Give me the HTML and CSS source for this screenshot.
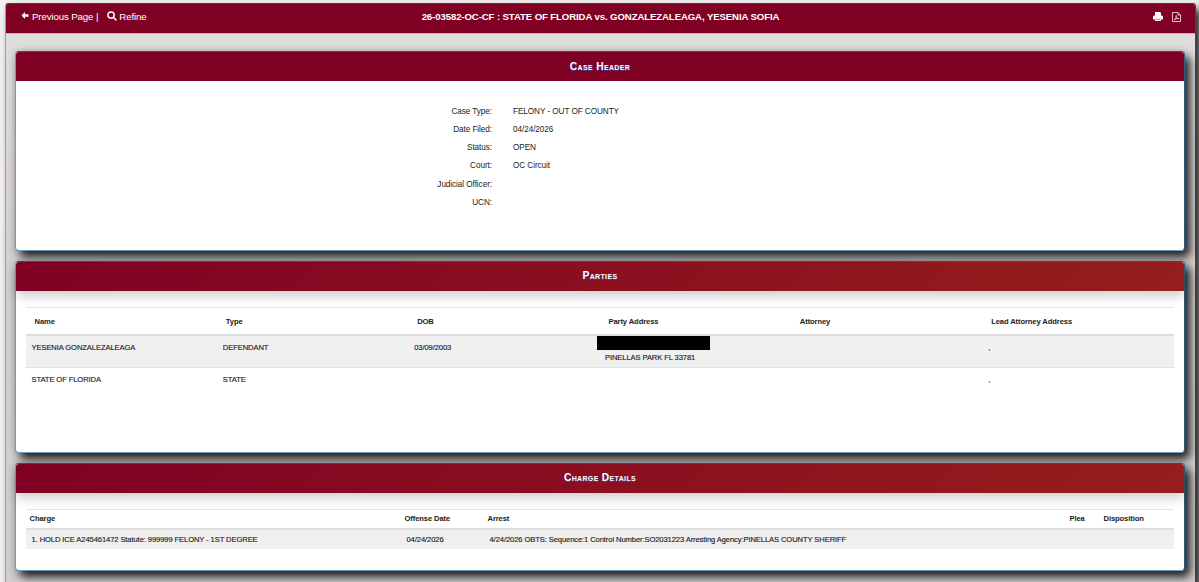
FILE: index.html
```html
<!DOCTYPE html>
<html lang="en">
<head>
<meta charset="utf-8">
<title>Case Details</title>
<link rel="stylesheet" href="styles.css">
</head>
<body>
<main class="case">
  <header class="topbar">
    <nav class="links">
      <a class="link back"><svg class="arrow" viewBox="0 0 16 16"><path d="M0 8 8 0v5h8v6H8v5z"/></svg><span>Previous Page |</span></a>
      <a class="link"><svg class="search" viewBox="0 0 16 16"><circle cx="6.500" cy="6.500" r="5"/><path d="m10 10 5 5"/></svg><span class="refine">Refine</span></a>
    </nav>
    <h1 class="title">26-03582-OC-CF : STATE OF FLORIDA vs. GONZALEZALEAGA, YESENIA SOFIA</h1>
    <div class="tools">
      <svg class="print" viewBox="0 0 20 18"><path d="M5 0h9l2 2v5h2l2 2v6h-4v3H4v-3H0V9l2-2h2V0z"/><path class="slot" d="M4 14.500h12"/></svg>
      <svg class="pdf" viewBox="0 0 18 20"><path d="M1 1h11l5 5v13H1zM12 1v5h5"/><path d="M4 16c4-2 5-6 4.500-9-1.500 1 0 6 5.500 6.500-3-1-8 0-10 2.500"/></svg>
    </div>
  </header>
  <div class="panels">
    <section class="panel summary">
      <h2 class="heading">Case Header</h2>
      <dl class="facts">
        <dt>Case Type:</dt><dd>FELONY - OUT OF COUNTY</dd>
        <dt>Date Filed:</dt><dd>04/24/2026</dd>
        <dt>Status:</dt><dd>OPEN</dd>
        <dt>Court:</dt><dd>OC Circuit</dd>
        <dt>Judicial Officer:</dt><dd></dd>
        <dt>UCN:</dt><dd></dd>
      </dl>
    </section>
    <section class="panel parties">
      <h2 class="heading fade">Parties</h2>
      <table class="grid">
        <thead><tr><th>Name</th><th>Type</th><th>DOB</th><th>Party Address</th><th>Attorney</th><th>Lead Attorney Address</th></tr></thead>
        <tbody>
          <tr class="shaded"><td>YESENIA GONZALEZALEAGA</td><td>DEFENDANT</td><td>03/09/2003</td><td class="address"><div class="redacted"></div><div class="city">PINELLAS PARK FL 33781</div></td><td></td><td class="comma">,</td></tr>
          <tr><td>STATE OF FLORIDA</td><td>STATE</td><td></td><td></td><td></td><td class="comma">,</td></tr>
        </tbody>
      </table>
    </section>
    <section class="panel charges">
      <h2 class="heading fade">Charge Details</h2>
      <table class="grid compact">
        <colgroup><col class="c-charge"><col class="c-date"><col class="c-arrest"><col class="c-plea"><col></colgroup>
        <thead><tr><th>Charge</th><th>Offense Date</th><th>Arrest</th><th>Plea</th><th>Disposition</th></tr></thead>
        <tbody><tr class="shaded"><td class="charge">1. HOLD ICE A245461472 Statute: 999999 FELONY - 1ST DEGREE</td><td>04/24/2026</td><td class="arrest">4/24/2026 OBTS: Sequence:1 Control Number:SO2031223 Arresting Agency:PINELLAS COUNTY SHERIFF</td><td></td><td></td></tr></tbody>
      </table>
    </section>
  </div>
</main>
</body>
</html>
```
FILE: styles.css
```css
* { box-sizing: border-box; }
html { height: 100%; overflow: hidden; }
body {
  margin: 0;
  height: 582px;
  padding: 3px 3px 0 5px;
  overflow: hidden;
  background: #f1f1f1;
  font-family: "Liberation Sans", Arial, sans-serif;
  color: #222;
}
.case {
  height: 600px;
  border: 1px solid #7fa5c4;
  border-top-color: #55325f;
  border-right-color: #24506f;
  border-radius: 3px;
  background: linear-gradient(#e0dfdd 30px, #dedcda 50px, #d4d0cf 260px, #d1cecd);
  box-shadow: 5px 6px 9px rgba(0, 0, 0, .85);
}
.topbar {
  height: 30px;
  display: grid;
  grid-template-columns: 1fr auto 1fr;
  align-items: center;
  padding: 0 14px;
  border-bottom: 1px solid #c3b2b9;
  border-radius: 2px 2px 0 0;
  background: #800024;
  color: #fff;
}
.links, .link, .tools { display: flex; align-items: center; }
.links { gap: 9px; padding-bottom: 4px; }
.link { font-size: 9.700px; line-height: 14px; gap: 3px; letter-spacing: -.13px; }
.arrow { width: 8px; height: 7px; fill: #fff; margin: -2px 0 0 1px; }
.search { width: 10px; height: 10px; fill: none; stroke: #fff; stroke-width: 2.3; margin-top: -2px; }
.refine { margin-left: -1px; }
.title { margin: 0 0 4px; font-size: 9.600px; line-height: 14px; letter-spacing: -.1px; white-space: nowrap; }
.tools { justify-content: flex-end; gap: 9px; }
.print { width: 10px; height: 9px; fill: #fff; margin-top: -5px; }
.slot { stroke: #800024; stroke-width: 1; }
.pdf { width: 9px; height: 10px; fill: none; stroke: #f4c8d4; stroke-width: 1.9; margin-top: -3px; }
.panels { padding: 17px 10px 0; margin-left: -1px; display: flex; flex-direction: column; gap: 10px; }
.panel {
  border: 1px solid #6f99b8;
  border-top-color: #6b3860;
  border-right-color: #315f80;
  border-radius: 4px;
  background: #fff;
  box-shadow: 5px 6px 10px rgba(0, 0, 0, .85), 0 0 9px rgba(0, 0, 0, .15);
}
.summary { height: 200px; }
.parties { height: 192px; }
.charges { height: 108px; }
.heading {
  margin: 0;
  height: 29px;
  border-radius: 3px 3px 0 0;
  background: #800024;
  color: #fff;
  font-size: 10.200px;
  letter-spacing: .35px;
  line-height: 30px;
  text-align: center;
  font-variant: small-caps;
  text-shadow: 0 1px 1px #3f46a0;
}
.fade { background: linear-gradient(135deg, #800024, #961e1b); line-height: 27px; box-shadow: 0 5px 12px rgba(0, 0, 0, .2); }
.facts {
  margin: 22px 0 0;
  display: grid;
  grid-template-columns: 476px 1fr;
  column-gap: 20px;
  grid-auto-rows: 18.150px;
  font-size: 8.200px;
  line-height: 18px;
  letter-spacing: -.07px;
}
.facts dt { text-align: right; }
.facts dd { margin: 0 0 0 1px; }
.grid {
  width: 1148px;
  margin: 16px 0 0 10px;
  table-layout: fixed;
  border-collapse: collapse;
  font-size: 7.600px;
  line-height: 11px;
  letter-spacing: -.1px;
  text-align: left;
}
.grid th { height: 27px; padding: 2px 0 0 8.500px; border-top: 1px solid #e3e3e3; border-bottom: 2px solid #dedede; }
.grid td { height: 33px; padding: 6px 0 0 5.500px; vertical-align: top; border-bottom: 1px solid #e1e1e1; -webkit-text-stroke: .15px #222; }
.grid tr:last-child td { border-bottom: 0; }
.shaded { background: #f0f0f0; }
.grid td.address { padding: 0; }
.redacted { width: 113px; height: 14px; margin-left: -3px; background: #000; }
.city { margin: 2px 0 0 5px; }
.grid.compact th { height: 19px; padding: 0 0 0 3.500px; }
.grid.compact td { height: 20px; padding: 4px 0 0 5.500px; white-space: nowrap; }
.c-charge { width: 375px; }
.c-date { width: 83px; }
.c-arrest { width: 582px; }
.c-plea { width: 34px; }
```
